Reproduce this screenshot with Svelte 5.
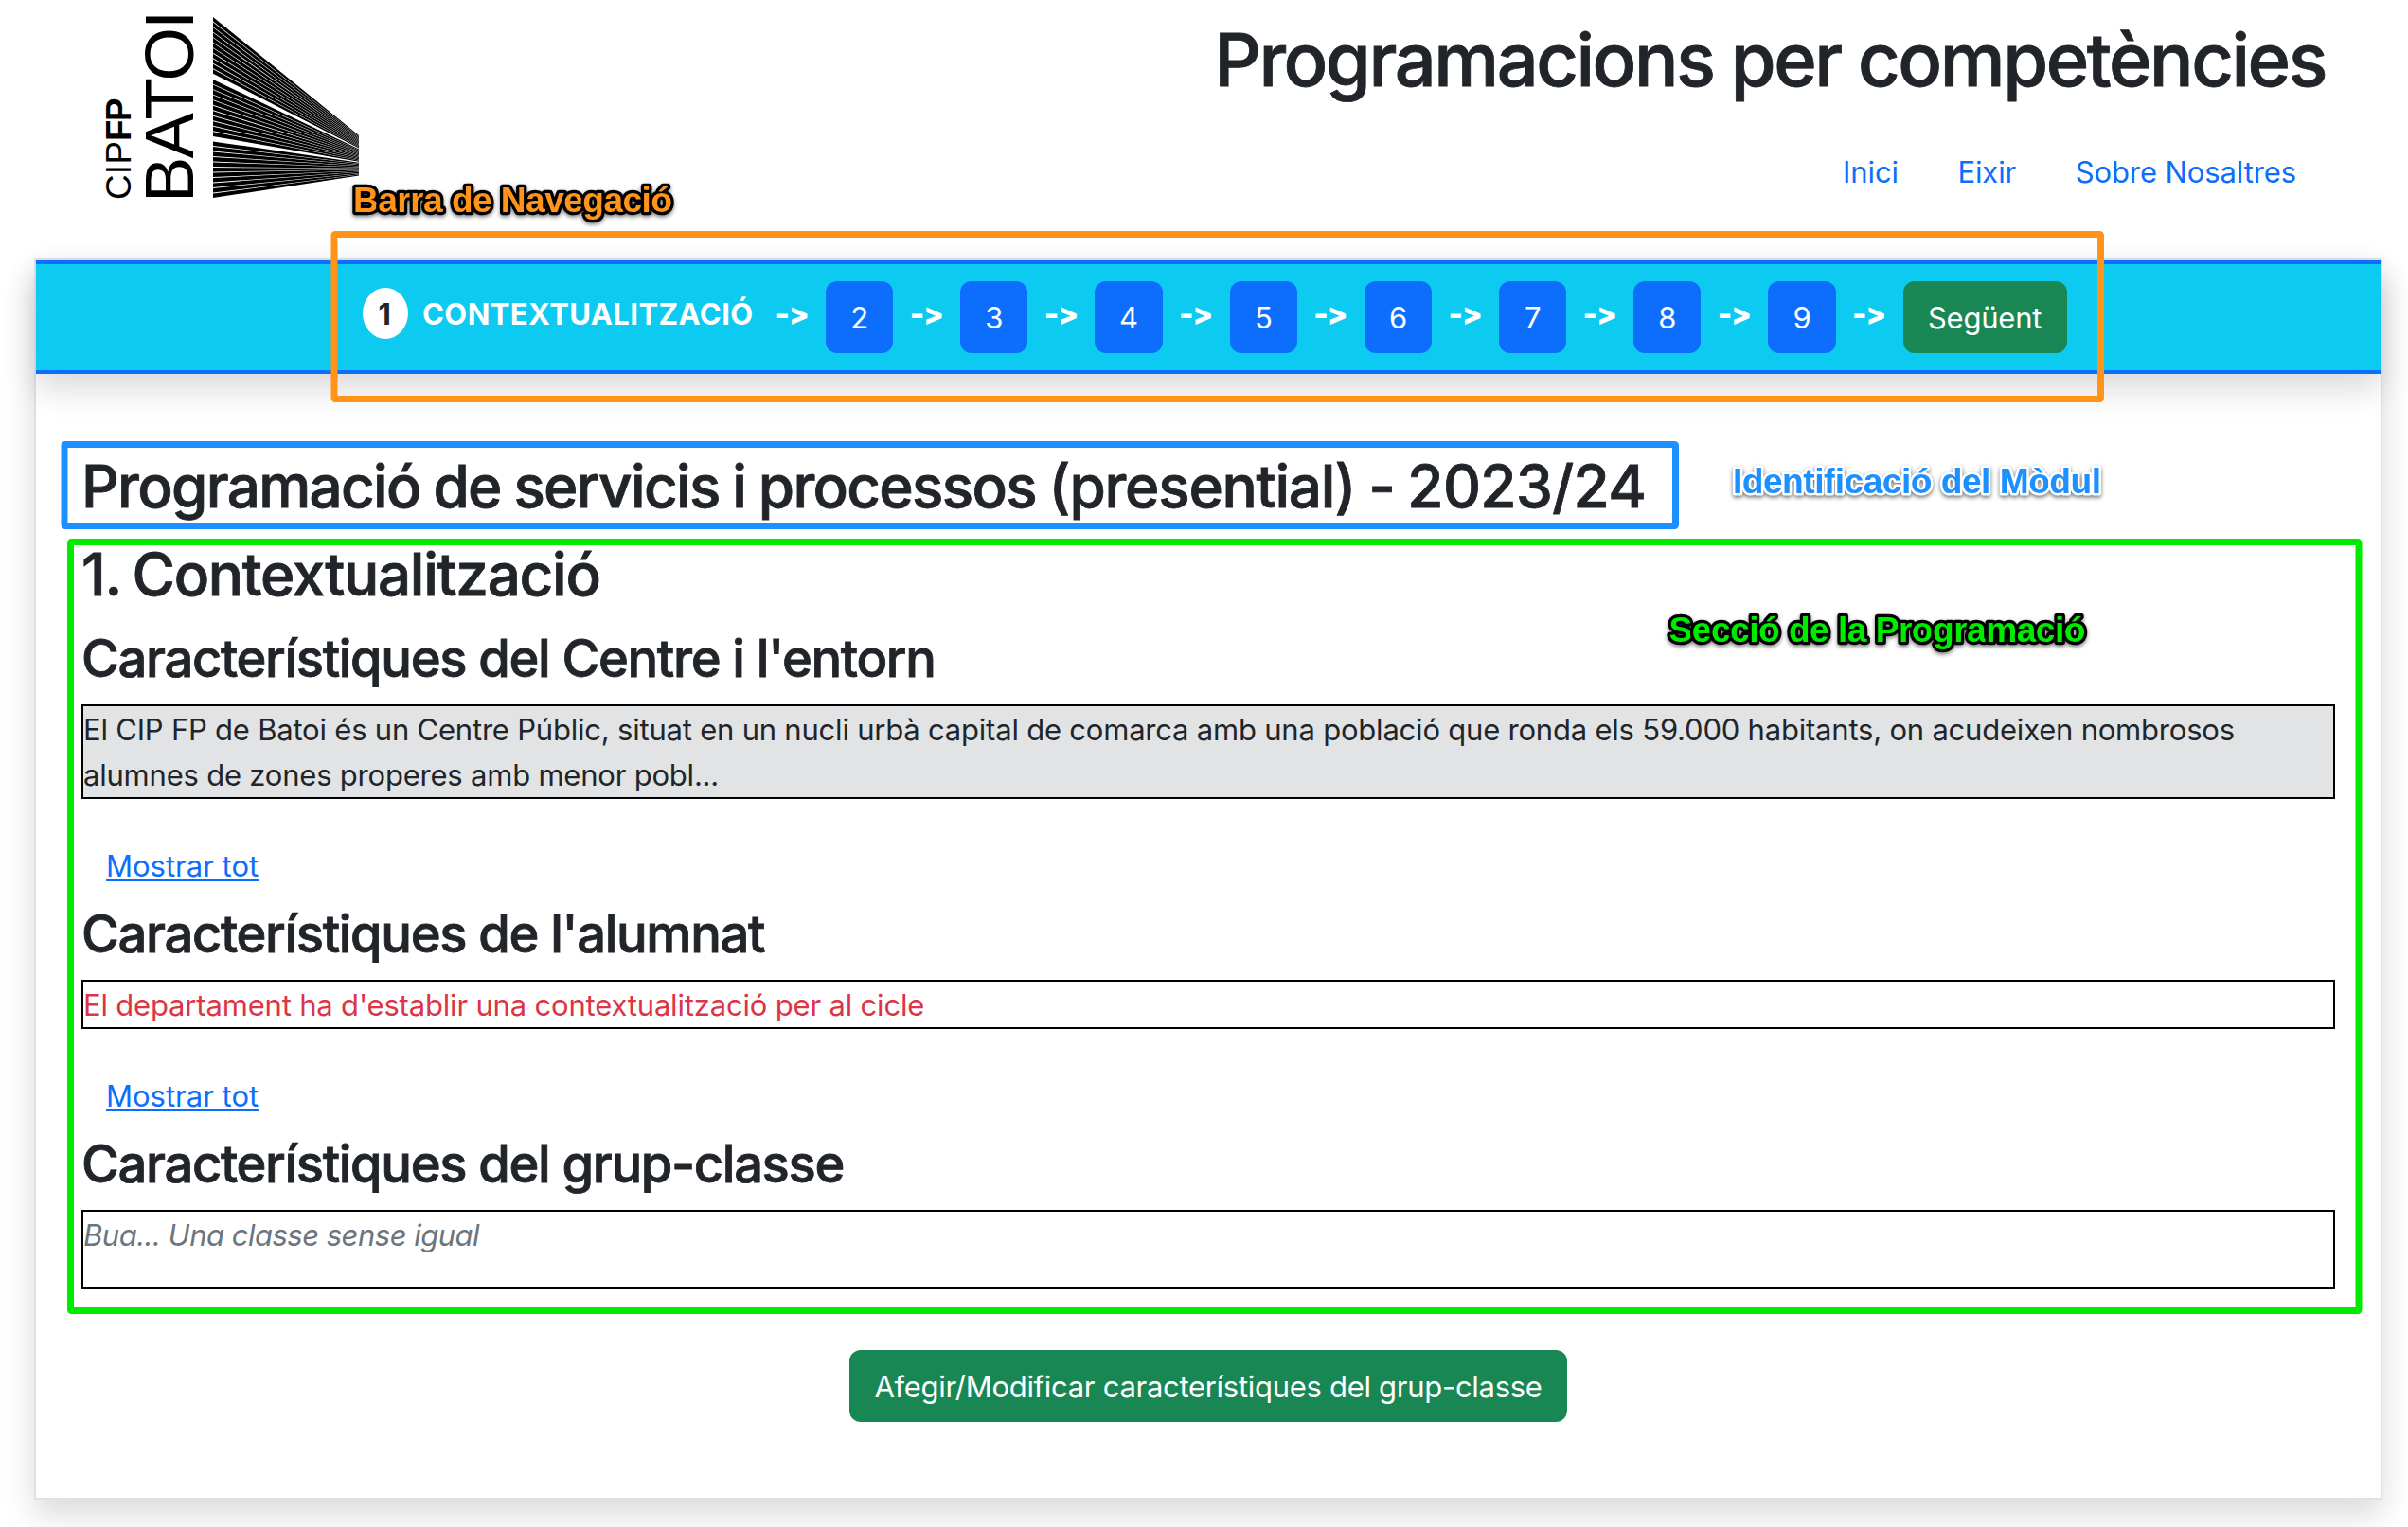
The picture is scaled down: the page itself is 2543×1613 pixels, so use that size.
<script>
  const links = ['Inici', 'Eixir', 'Sobre Nosaltres'];
  const steps = [2, 3, 4, 5, 6, 7, 8, 9];

  // Logo: three fans of eleven stripes converging to the right
  const fans = [
    { left: [18, 77.7], right: [143, 156.4] },
    { left: [84, 143.8], right: [157.4, 170.8] },
    { left: [149.4, 209], right: [171.8, 185.4] }
  ];
  const COUNT = 11;
  const stripes = fans.flatMap(({ left, right }) => {
    const l = (left[1] - left[0] + 1) / COUNT;
    const r = (right[1] - right[0] + 0.25) / COUNT;
    return Array.from({ length: COUNT }, (_, i) => {
      const a = left[0] + i * l;
      const b = right[0] + i * r;
      return `225,${a} 379,${b} 379,${b + r - 0.25} 225,${a + l - 0.9}`;
    });
  });
</script>

<div class="page">
  <header>
    <svg class="logo" width="400" height="230" viewBox="0 0 400 230" role="img" aria-label="CIPFP Batoi">
      <text class="mark small" transform="translate(138 211) rotate(-90)">CIP</text>
      <text class="mark small strong" transform="translate(138 149) rotate(-90)">FP</text>
      <text class="mark big" transform="translate(204 214) rotate(-90)">BATOI</text>
      {#each stripes as points}<polygon {points} />{/each}
    </svg>
    <div class="head">
      <h1>Programacions per competències</h1>
      <nav>
        {#each links as link}<a href="#top">{link}</a>{/each}
      </nav>
    </div>
  </header>

  <main>
    <div class="stepper">
      <span class="current">1</span>
      <span class="label">CONTEXTUALITZACIÓ</span>
      {#each steps as step}
        <span class="arrow">-&gt;</span>
        <button class="btn step">{step}</button>
      {/each}
      <span class="arrow">-&gt;</span>
      <button class="btn next">Següent</button>
    </div>

    <div class="content">
      <h2 class="module">Programació de servicis i processos <span class="mode">(presential) -</span> <span class="year">2023/24</span></h2>
      <h2 class="section">1. Contextualització</h2>

      <h3>Característiques del Centre i l'entorn</h3>
      <div class="box filled">
        El CIP FP de Batoi és un Centre Públic, situat en un nucli urbà capital de comarca amb una població que ronda els 59.000 habitants, on acudeixen nombrosos alumnes de zones properes amb menor pobl...
      </div>
      <button class="more">Mostrar tot</button>

      <h3>Característiques de l'alumnat</h3>
      <div class="box danger">El departament ha d'establir una contextualització per al cicle</div>
      <button class="more">Mostrar tot</button>

      <h3>Característiques del grup-classe</h3>
      <div class="box quote">Bua... Una classe sense igual</div>

      <div class="actions">
        <button class="btn edit">Afegir/Modificar característiques del grup-classe</button>
      </div>
    </div>
  </main>

  <!-- Callouts drawn over the page -->
  <svg class="callouts" width="2543" height="1613" viewBox="0 0 2543 1613">
    <rect class="frame orange" x="353" y="247.500" width="1865.500" height="174" rx="1" />
    <rect class="frame blue" x="68" y="469.500" width="1701.500" height="86" rx="1" />
    <rect class="frame green" x="74.500" y="572.500" width="2416.500" height="812" rx="1" />
    <text class="tag on-dark orange" x="373" y="224" textLength="337">Barra de Navegació</text>
    <text class="tag on-light blue" x="1830" y="520.500" textLength="389">Identificació del Mòdul</text>
    <text class="tag on-dark green" x="1762.500" y="678" textLength="440">Secció de la Programació</text>
  </svg>
</div>

<style>
  :global(body) { margin: 0; background: #fff; }

  .page {
    position: relative;
    width: 2543px;
    height: 1613px;
    overflow: hidden;
    font: 400 31px/48px Inter, 'Liberation Sans', sans-serif;
    font-feature-settings: 'calt' 0;
    letter-spacing: -0.21px;
    color: #212529;
    background: #fff;
  }

  button { border: 0; font: inherit; font-feature-settings: inherit; letter-spacing: inherit; color: inherit; }

  header { display: flex; justify-content: space-between; height: 273px; }
  .logo { display: block; }
  .logo polygon { fill: #000; }
  .mark { font-family: 'Liberation Sans', sans-serif; fill: #000; }
  .small { font-size: 36.8px; letter-spacing: 0.3px; }
  .strong { font-weight: 700; letter-spacing: -1.6px; }
  .big { font-size: 72.6px; letter-spacing: -2px; }

  .head { display: flex; flex-direction: column; align-items: flex-end; padding: 15px 87px 0 0; }
  h1 { margin: 0; font-size: 77.5px; line-height: 96px; font-weight: 500; letter-spacing: -2.43px; white-space: nowrap; }
  nav { display: flex; gap: 62.500px; margin-top: 47px; padding-right: 31px; letter-spacing: -0.1px; }
  nav a { color: #0d6efd; text-decoration: none; }

  main {
    box-sizing: border-box;
    width: 2480px;
    height: 1311px;
    margin-left: 36px;
    border: 2px solid #dee2e6;
    background: #fff;
    box-shadow: 0 16px 32px rgba(0, 0, 0, 0.15);
  }

  .stepper {
    display: flex;
    align-items: center;
    height: 112px;
    padding-left: 345px;
    border-top: 4px solid #0d6efd;
    border-bottom: 4px solid #0d6efd;
    background: #0dcaf0;
    box-shadow: 0 16px 32px rgba(0, 0, 0, 0.15);
    font-weight: 700;
    color: #fff;
  }
  .current {
    box-sizing: border-box;
    width: 48px;
    height: 54px;
    margin: 0 15px 8px 0;
    padding: 4px 2px 0 0;
    border-radius: 50%;
    background: #fff;
    color: #212529;
    text-align: center;
  }
  .label { width: 355px; padding-bottom: 6px; letter-spacing: 0.42px; white-space: nowrap; }
  .arrow { width: 71.100px; padding-bottom: 6px; text-align: center; letter-spacing: -0.2px; -webkit-text-stroke: 0.8px #fff; }

  .btn {
    box-sizing: border-box;
    height: 76px;
    padding: 1px 0 0;
    border-radius: 12px;
    font-weight: 400;
    color: #fff;
    text-align: center;
    white-space: nowrap;
  }
  .step { width: 71.100px; background: #0d6efd; }
  .next { width: 173px; background: #198754; }
  .edit { width: 758px; background: #198754; letter-spacing: -0.29px; }

  .content { padding: 80px 48px 0; }
  h1, h2, h3 { -webkit-text-stroke: 0.8px #212529; }
  h2, h3 { margin: 0 0 16px; padding-top: 2px; font-weight: 500; }
  h2 { font-size: 62px; line-height: 74.800px; }
  h3 { font-size: 54.300px; line-height: 65.200px; letter-spacing: -1.340px; }
  .module { letter-spacing: -1.700px; word-spacing: -1.200px; }
  .mode { letter-spacing: -1.250px; }
  .year { letter-spacing: -0.600px; }
  .section { letter-spacing: -1.300px; word-spacing: -3px; }

  .box { box-sizing: border-box; height: 52px; padding-top: 1px; border: 2px solid #000; }
  .filled { height: 100px; padding-right: 60px; background: #e2e3e5; }
  .danger { color: #dc3545; letter-spacing: -0.180px; }
  .quote { height: 84px; color: #6c757d; font-style: italic; letter-spacing: -0.5px; }

  .more {
    display: block;
    height: 76px;
    margin: 32px 0 0;
    padding: 2px 26px 0;
    background: none;
    color: #0d6efd;
    letter-spacing: 0;
    text-decoration: underline;
    text-decoration-thickness: 3px;
    text-underline-offset: 2px;
    text-decoration-skip-ink: none;
  }

  .actions { display: flex; justify-content: center; margin-top: 64px; }

  .callouts { position: absolute; inset: 0; pointer-events: none; }
  .frame { fill: none; stroke-width: 7px; }
  .frame.orange { stroke: #ff9419; }
  .frame.blue { stroke: #1c90ff; }
  .frame.green { stroke: #00eb00; }
  .tag {
    font: 700 37.200px 'Liberation Sans', sans-serif;
    letter-spacing: 0;
    paint-order: stroke;
    stroke-linejoin: round;
  }
  .tag.orange { fill: #ff9419; }
  .tag.blue { fill: #1c90ff; }
  .tag.green { fill: #00eb00; }
  .on-dark { stroke: #000; stroke-width: 6.500px; filter: drop-shadow(0 2px 2px rgba(0, 0, 0, 0.5)); }
  .on-light { stroke: #fff; stroke-width: 5px; filter: drop-shadow(0 2px 2px rgba(0, 0, 0, 0.55)); }
</style>
